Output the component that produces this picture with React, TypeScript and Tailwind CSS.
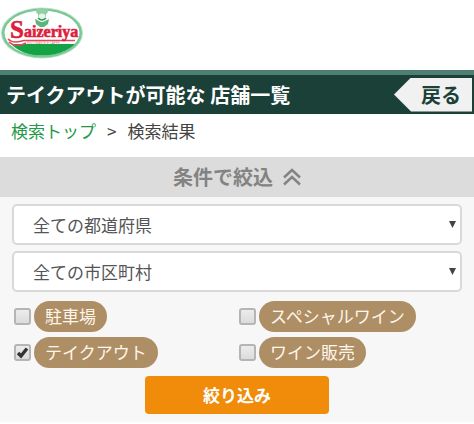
type Option = {
  id: string,
  name: string,
  checked: boolean,
}

const options: Option[] = [
  { id: "parking", name: "駐車場", checked: false },
  { id: "wine", name: "スペシャルワイン", checked: false },
  { id: "takeout", name: "テイクアウト", checked: true },
  { id: "wine-sale", name: "ワイン販売", checked: false },
];

function Logo() {
  return (
    <svg width="86" height="60" viewBox="0 0 86 60" role="img" aria-label="Saizeriya">
      <ellipse cx="42" cy="33" rx="41" ry="25.5" fill="#b5e2c3" />
      <ellipse cx="42" cy="33" rx="40" ry="24.5" fill="#7cc697" />
      <ellipse cx="42" cy="33" rx="37.5" ry="22.5" fill="#ffffff" />
      <path d="M11 44H75C68 51 56 55.5 42 55.5S18 51 11 44Z" fill="#13a345" />
      {/* chef */}
      <path d="M36 11Q37 7.500 40 9Q42 7 44 9Q47 7.500 48 11Q48 13.500 46 14V17H38V14Q36 13.500 36 11Z" fill="#8fd0a5" />
      <path d="M35 19L39 21Q42 23 45 21L49 19L48 24L44 27H40L36 24Z" fill="#5cb67b" />
      <circle cx="42" cy="17" r="3.500" fill="#e6f4ea" />
      <path d="M38 18Q42 22 46 18" fill="none" stroke="#2f9a55" strokeWidth="1.5" />
      <path d="M8 39Q13 44 24 40.500H75" fill="none" stroke="#e0475a" strokeWidth="1.5" />
      <path d="M9 42Q16 48 26 43" fill="none" stroke="#e0475a" strokeWidth="1.5" />
      <g fill="#dc1f3c" stroke="#dc1f3c" strokeWidth="0.6" fontFamily="'Liberation Serif', serif" fontWeight="bold">
        <text x="10" y="38" fontSize="25">S</text>
        <text x="24" y="37" fontSize="16">aizeriya</text>
      </g>
      <text x="27" y="44" fontSize="3" fill="#d77" fontFamily="'Liberation Sans', sans-serif">RISTORANTE E CAFFE</text>
    </svg>
  );
}

function Select(props: { label: string, value: string }) {
  return (
    <div className="relative">
      <select
        aria-label={props.label}
        className="block w-full h-[41px] appearance-none rounded-[5px] border-2 border-[#d9d9d9] bg-white pl-[19px] pr-8 text-[17px] text-[#555]"
      >
        <option>{props.value}</option>
      </select>
      <svg className="pointer-events-none absolute right-[6px] top-[17px]" width="7" height="7" viewBox="0 0 7 7">
        <path d="M0 0H7L3.5 7Z" fill="#444" />
      </svg>
    </div>
  );
}

function CheckItem(props: Option) {
  return (
    <div className="flex items-center gap-[3px] pl-[2px]">
      <span className="relative flex">
        <input
          id={props.id}
          type="checkbox"
          defaultChecked={props.checked}
          className="peer size-[17px] appearance-none rounded-[3px] border-2 border-[#b5b5b5] bg-linear-to-b from-[#ececec] to-[#dcdcdc]"
        />
        <svg className="pointer-events-none absolute left-0 top-0 hidden peer-checked:block" width="17" height="17" viewBox="0 0 17 17">
          <path d="M4 9L7 12L13 4.5" fill="none" stroke="#333" strokeWidth="3.4" />
        </svg>
      </span>
      <label htmlFor={props.id} className="h-[31px] rounded-full bg-[#ae8e65] px-[11px] text-[17px] leading-[30px] text-[#fff6ea]">
        {props.name}
      </label>
    </div>
  );
}

export default function App() {
  return (
    <div className="bg-white font-['Noto_Sans_CJK_JP',sans-serif]">
      <header className="h-[70px]">
        <Logo />
      </header>

      <div className="flex h-11 items-center justify-between border-t-[5px] border-[#4f7f72] bg-[#1a4038] pl-[6px] pr-[2px]">
        <h1 className="text-xl font-bold leading-8 text-white">テイクアウトが可能な 店舗一覧</h1>
        <button className="h-[34px] w-[78px] bg-[#f1f1f1] pl-[16px] text-xl font-bold leading-8 text-[#1a4038] [clip-path:polygon(0_50%,17px_0,100%_0,100%_100%,17px_100%)]">
          戻る
        </button>
      </div>

      <nav className="flex h-[43px] gap-[11px] pl-[11px] text-[17px] leading-[34px] text-[#444]">
        <a href="#" className="text-[#1f9a48]">検索トップ</a>
        <span>&gt;</span>
        <span>検索結果</span>
      </nav>

      <button className="flex h-10 w-full items-center justify-center gap-[10px] bg-[#dcdcdc] text-xl font-bold text-[#838383]">
        条件で絞込
        <svg width="18" height="18" viewBox="0 0 18 18" fill="none" stroke="#838383" strokeWidth="2.4">
          <path d="M1 9.5L9 2L17 9.5" />
          <path d="M1 16.5L9 9L17 16.5" />
        </svg>
      </button>

      <form className="bg-[#f7f7f7] px-3 pt-[7px] pb-2">
        <div className="flex flex-col gap-[6px]">
          <Select label="都道府県" value="全ての都道府県" />
          <Select label="市区町村" value="全ての市区町村" />
        </div>
        <div className="mt-[9px] grid grid-cols-2 gap-y-[5px]">
          {options.map((option) => (
            <CheckItem key={option.id} {...option} />
          ))}
        </div>
        <button type="button" className="mx-auto mt-2 block h-[38px] w-[184px] rounded bg-[#f08c0a] text-[17px] font-bold text-white">
          絞り込み
        </button>
      </form>
    </div>
  );
}
